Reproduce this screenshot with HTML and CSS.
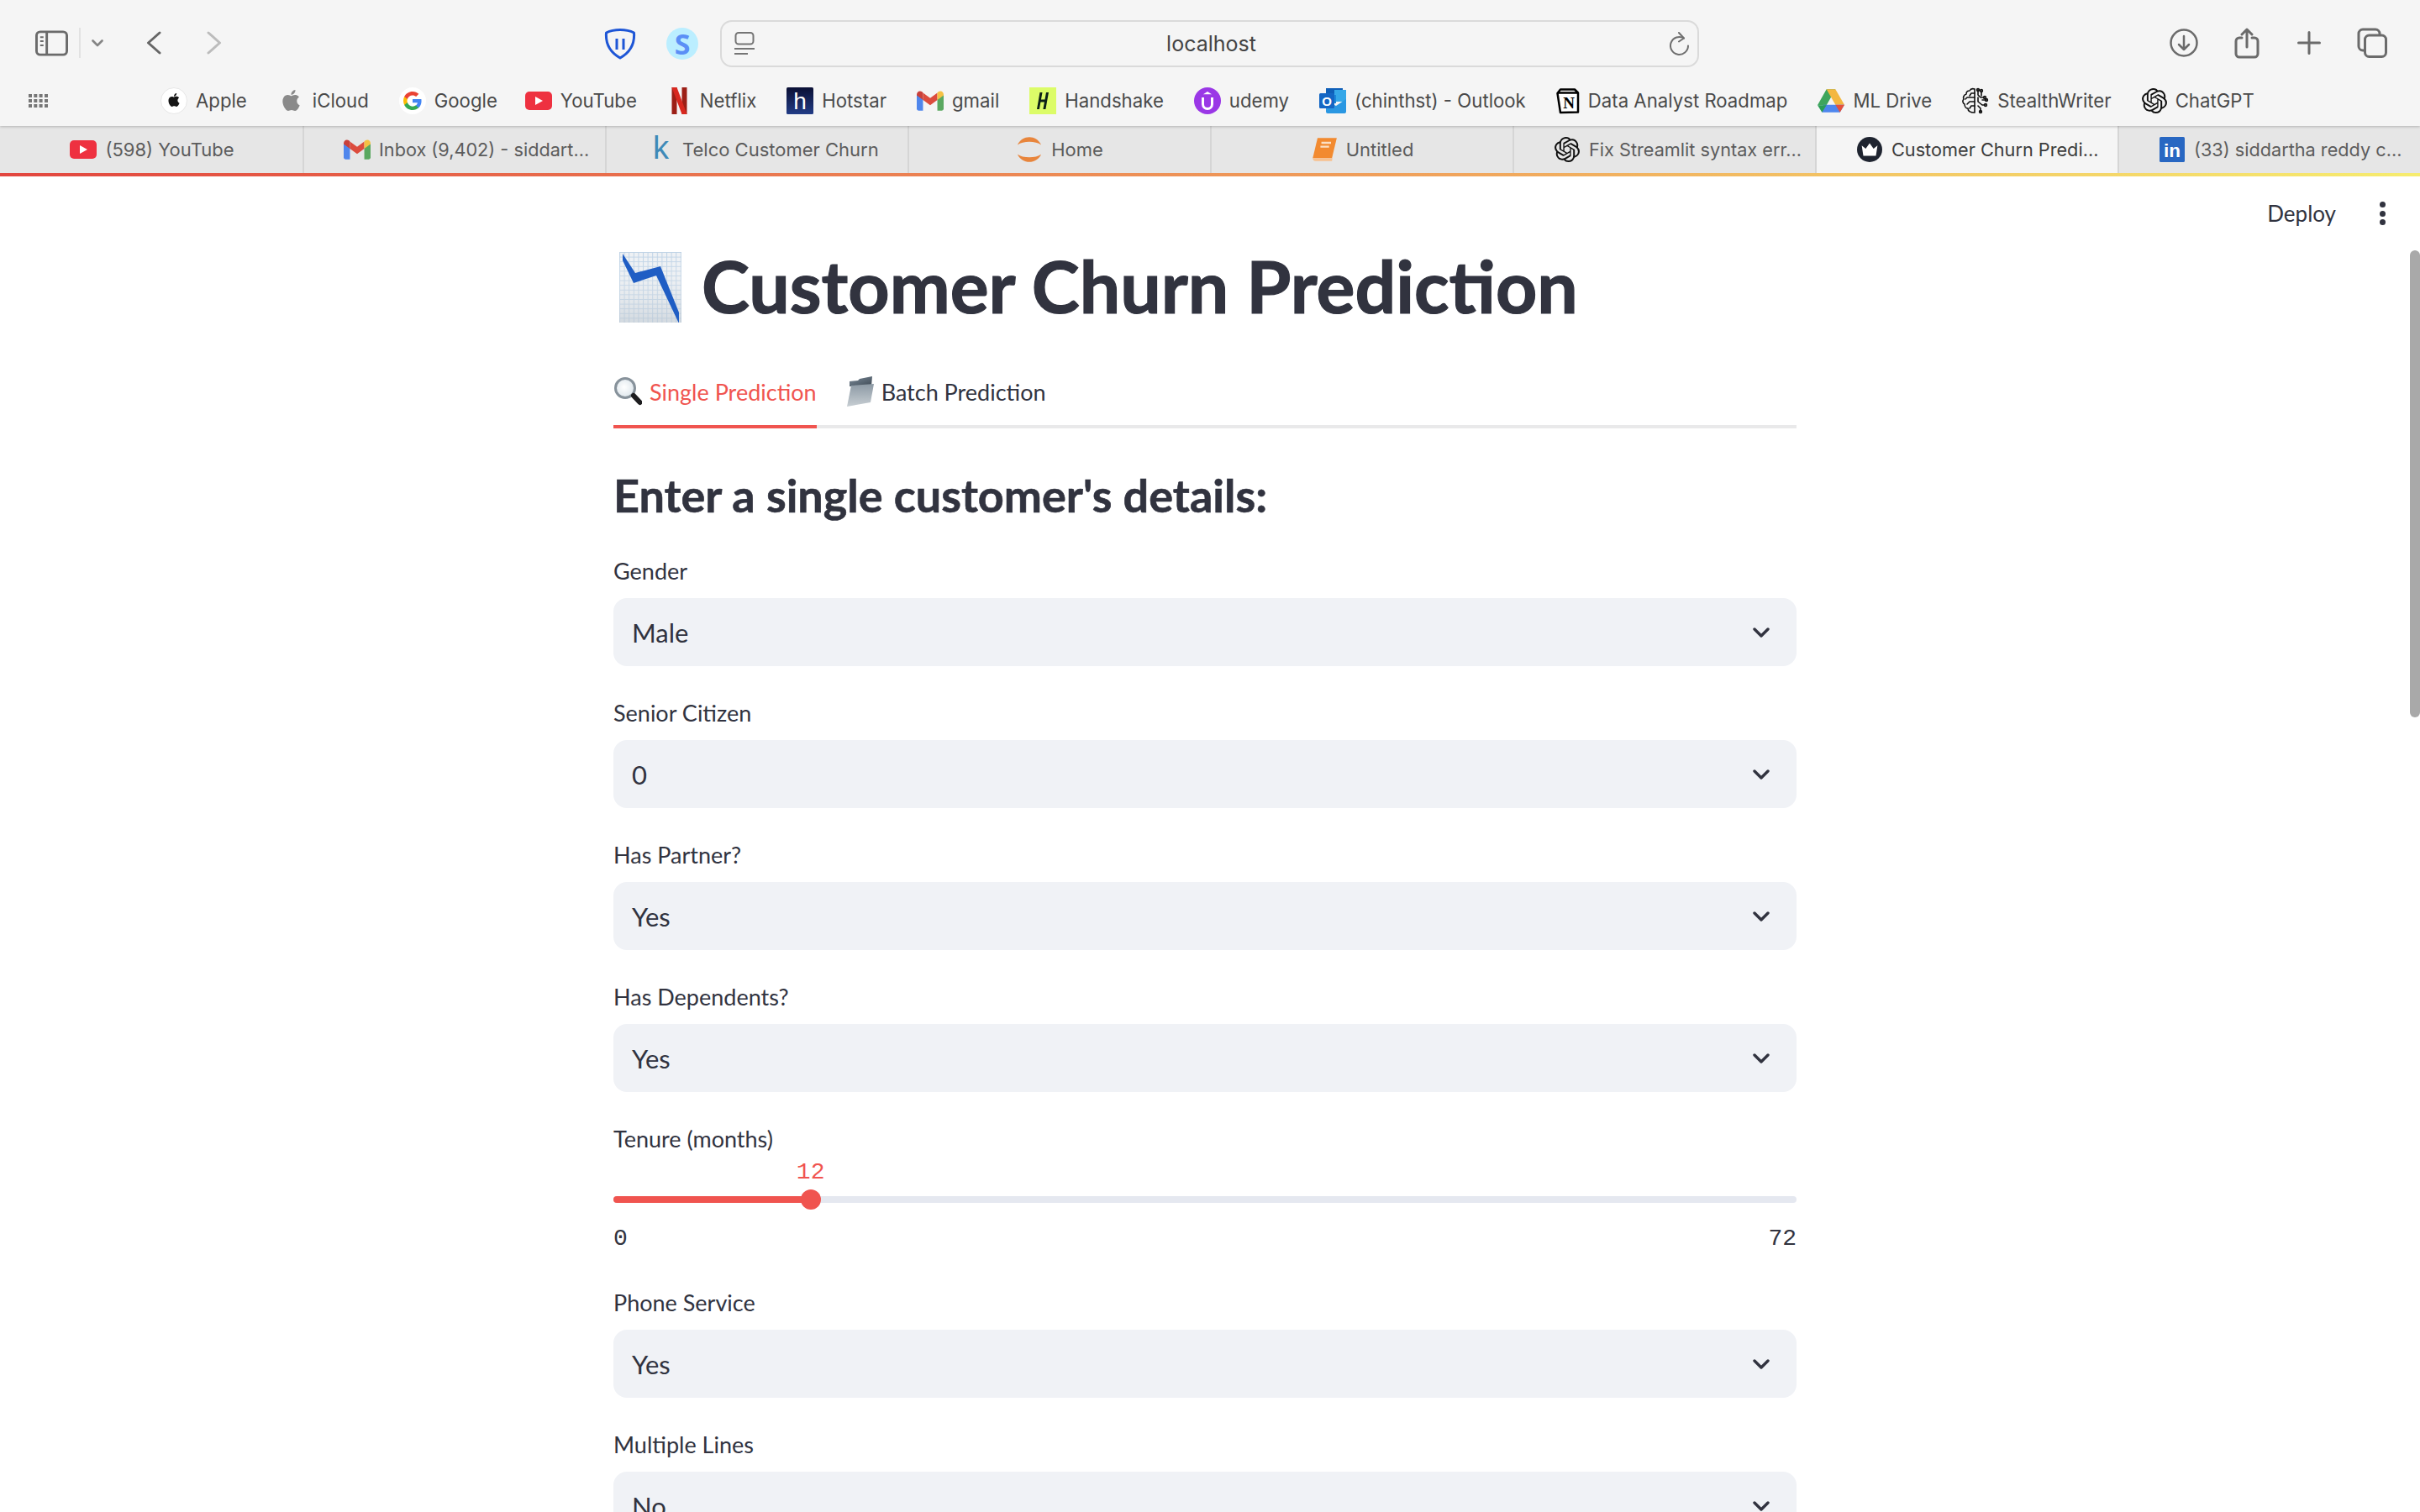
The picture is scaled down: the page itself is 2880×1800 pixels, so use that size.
FILE: index.html
```html
<!DOCTYPE html>
<html lang="en">
<head>
<meta charset="utf-8">
<title>Customer Churn Prediction</title>
<link rel="stylesheet" href="styles.css">
</head>
<body>
<svg class="defs" aria-hidden="true">
  <defs>
    <symbol id="i-yt" viewBox="0 0 32 24"><rect y="1" width="32" height="22" rx="5" fill="#ee3140"/><path d="M12 7l9 5-9 5z" fill="#fff"/></symbol>
    <symbol id="i-gmail" viewBox="0 0 30 24"><path d="M0 5v16a2 2 0 0 0 2 2h5V10z" fill="#4f86ec"/><path d="M23 23h5a2 2 0 0 0 2-2V5l-7 5z" fill="#5aa860"/><path d="M7 11V3l8 6 8-6v8l-8 6z" fill="#dc4c3e"/><path d="M0 5c0-3 3-5 6-3l1 1v8L0 6z" fill="#c9403a"/><path d="M23 3l1-1c3-2 6 0 6 3v1l-7 5z" fill="#f5c144"/></symbol>
    <symbol id="i-gpt" viewBox="0 0 24 24"><path d="M22.2819 9.8211a5.9847 5.9847 0 0 0-.5157-4.9108 6.0462 6.0462 0 0 0-6.5098-2.9A6.0651 6.0651 0 0 0 4.9807 4.1818a5.9847 5.9847 0 0 0-3.9977 2.9 6.0462 6.0462 0 0 0 .7427 7.0966 5.98 5.98 0 0 0 .511 4.9107 6.051 6.051 0 0 0 6.5146 2.9001A5.9847 5.9847 0 0 0 13.2599 24a6.0557 6.0557 0 0 0 5.7718-4.2058 5.9894 5.9894 0 0 0 3.9977-2.9001 6.0557 6.0557 0 0 0-.7475-7.0729zm-9.022 12.6081a4.4755 4.4755 0 0 1-2.8764-1.0408l.1419-.0804 4.7783-2.7582a.7948.7948 0 0 0 .3927-.6813v-6.7369l2.02 1.1686a.071.071 0 0 1 .038.052v5.5826a4.504 4.504 0 0 1-4.4945 4.4944zm-9.6607-4.1254a4.4708 4.4708 0 0 1-.5346-3.0137l.142.0852 4.783 2.7582a.7712.7712 0 0 0 .7806 0l5.8428-3.3685v2.3324a.0804.0804 0 0 1-.0332.0615L9.74 19.9502a4.4992 4.4992 0 0 1-6.1408-1.6464zM2.3408 7.8956a4.485 4.485 0 0 1 2.3655-1.9728V11.6a.7664.7664 0 0 0 .3879.6765l5.8144 3.3543-2.0201 1.1685a.0757.0757 0 0 1-.071 0l-4.8303-2.7865A4.504 4.504 0 0 1 2.3408 7.872zm16.5963 3.8558L13.1038 8.364 15.1192 7.2a.0757.0757 0 0 1 .071 0l4.8303 2.7913a4.4944 4.4944 0 0 1-.6765 8.1042v-5.6772a.79.79 0 0 0-.407-.667zm2.0107-3.0231l-.142-.0852-4.7735-2.7818a.7759.7759 0 0 0-.7854 0L9.409 9.2297V6.8974a.0662.0662 0 0 1 .0284-.0615l4.8303-2.7866a4.4992 4.4992 0 0 1 6.6802 4.66zM8.3065 12.863l-2.02-1.1638a.0804.0804 0 0 1-.038-.0567V6.0742a4.4992 4.4992 0 0 1 7.3757-3.4537l-.142.0805L8.704 5.459a.7948.7948 0 0 0-.3927.6813zm1.0976-2.3654l2.602-1.4998 2.6069 1.4998v2.9994l-2.5974 1.4997-2.6067-1.4997Z" fill="#111"/></symbol>
    <symbol id="i-apple" viewBox="0 0 24 24"><path d="M12.152 6.896c-.948 0-2.415-1.078-3.96-1.04-2.04.027-3.91 1.183-4.961 3.014-2.117 3.675-.546 9.103 1.519 12.09 1.013 1.454 2.208 3.09 3.792 3.039 1.52-.065 2.09-.987 3.935-.987 1.831 0 2.35.987 3.96.948 1.637-.026 2.676-1.48 3.676-2.948 1.156-1.688 1.636-3.325 1.662-3.415-.039-.013-3.182-1.221-3.22-4.857-.026-3.04 2.48-4.494 2.597-4.559-1.429-2.09-3.623-2.324-4.39-2.376-2-.156-3.675 1.09-4.61 1.09zM15.53 3.83c.843-1.012 1.4-2.427 1.245-3.83-1.207.052-2.662.805-3.532 1.818-.78.896-1.454 2.338-1.273 3.714 1.338.104 2.715-.688 3.559-1.701"/></symbol>
    <pattern id="grid" width="5.6" height="5.6" patternUnits="userSpaceOnUse"><rect width="5.6" height="5.6" fill="#eef1f4"/><path d="M0 .5h5.6M.5 0v5.6" stroke="#bfd3e6" stroke-width="1"/></pattern>
    <linearGradient id="chartbg" x1="0" y1="0" x2="0" y2="1"><stop offset="0" stop-color="#fff" stop-opacity="0"/><stop offset="1" stop-color="#bcc6cf" stop-opacity=".55"/></linearGradient>
    <linearGradient id="folder" x1="0" y1="0" x2="1" y2="1"><stop offset="0" stop-color="#7a8a98"/><stop offset="1" stop-color="#3f4a55"/></linearGradient>
    <linearGradient id="folder2" x1="0" y1="0" x2="0" y2="1"><stop offset="0" stop-color="#8c99a4"/><stop offset="1" stop-color="#c7ced3"/></linearGradient>
    <linearGradient id="hot" x1="0" y1="0" x2="0" y2="1"><stop offset="0" stop-color="#0b1034"/><stop offset="1" stop-color="#223c86"/></linearGradient>
    <radialGradient id="lens" cx=".45" cy=".45" r=".6"><stop offset="0" stop-color="#fff"/><stop offset="1" stop-color="#dbe4ea"/></radialGradient>
  </defs>
</svg>

<header class="chrome">
  <div class="toolbar">
    <div class="nav">
      <svg class="ic-side" viewBox="0 0 40 31" fill="none" stroke="#6b6b6b" stroke-width="3"><rect x="1.5" y="1.5" width="37" height="28" rx="4.5"/><path d="M14 2v27"/><path d="M6 8h4M6 13h4M6 18h4" stroke-width="2"/></svg>
      <span class="nav-sep"></span>
      <svg class="ic-chev" viewBox="0 0 14 9" fill="none" stroke="#858585" stroke-width="2.6" stroke-linecap="round" stroke-linejoin="round"><path d="M1.5 1.5L7 7l5.5-5.5"/></svg>
      <svg class="ic-back" viewBox="0 0 18 28" fill="none" stroke="#666" stroke-width="3" stroke-linecap="round" stroke-linejoin="round"><path d="M16 2L2.5 14 16 26"/></svg>
      <svg class="ic-fwd" viewBox="0 0 18 28" fill="none" stroke="#bcbcbc" stroke-width="3" stroke-linecap="round" stroke-linejoin="round"><path d="M2 2l13.500 12L2 26"/></svg>
    </div>
    <div class="exts">
      <svg class="ic-ext" viewBox="0 0 38 38" fill="none" stroke="#1e56d6" stroke-width="3"><path d="M19 2.500c6 0 12 1.200 16.500 3.500 1 13-4 23-16.500 30C6.500 29 1.500 19 2.500 6 7 3.700 13 2.500 19 2.500z" stroke-linejoin="round"/><path d="M15 13v13M23 13v13"/></svg>
      <span class="ext-s">S</span>
    </div>
    <div class="address">
      <svg class="ic-page" viewBox="0 0 24 28" fill="none" stroke="#757575" stroke-width="2"><rect x="1.500" y="1" width="21" height="13.500" rx="3.500"/><path d="M0 20h24M0 26h16"/></svg>
      <span class="host">localhost</span>
      <svg class="ic-reload" viewBox="0 0 24 28" fill="none" stroke="#6f6f6f" stroke-width="2" stroke-linecap="round" stroke-linejoin="round"><path d="M17 7.500A10.500 10.500 0 1 0 22 16.500"/><path d="M11 1l6 6.500-6 4"/></svg>
    </div>
    <div class="actions">
      <svg class="ic-dl" viewBox="0 0 34 34" fill="none" stroke="#6b6b6b" stroke-width="2.500" stroke-linecap="round" stroke-linejoin="round"><circle cx="17" cy="17" r="15.500"/><path d="M17 9v16M11 19l6 6 6-6"/></svg>
      <svg class="ic-share" viewBox="0 0 30 37" fill="none" stroke="#6b6b6b" stroke-width="3" stroke-linecap="round" stroke-linejoin="round"><path d="M9 12H6a4 4 0 0 0-4 4v15a4 4 0 0 0 4 4h18a4 4 0 0 0 4-4V16a4 4 0 0 0-4-4h-3"/><path d="M15 23V2M9 8l6-6 6 6"/></svg>
      <svg class="ic-plus" viewBox="0 0 28 28" fill="none" stroke="#6b6b6b" stroke-width="3" stroke-linecap="round"><path d="M14 1.500v25M1.500 14h25"/></svg>
      <svg class="ic-tabs" viewBox="0 0 36 36" fill="none" stroke="#6b6b6b" stroke-width="3"><rect x="9.500" y="9" width="25" height="25.500" rx="5"/><path d="M9 27H7a5 5 0 0 1-5-5V7a5 5 0 0 1 5-5h15a5 5 0 0 1 5 5v2"/></svg>
    </div>
  </div>

  <nav class="bookmarks">
    <svg class="ic-grid" viewBox="0 0 23 16" fill="#767676"><path d="M0 0h4v4H0zM6.300 0h4v4h-4zM12.600 0h4v4h-4zM19 0h4v4h-4zM0 6h4v4H0zM6.300 6h4v4h-4zM12.600 6h4v4h-4zM19 6h4v4h-4zM0 12h4v4H0zM6.300 12h4v4h-4zM12.600 12h4v4h-4zM19 12h4v4h-4z"/></svg>
    <div class="marks">
      <a class="mark"><svg class="fav" viewBox="0 0 32 32"><circle cx="16" cy="16" r="15.500" fill="#fff" stroke="#e6e6e6"/><use href="#i-apple" x="8" y="7" width="16" height="16" fill="#161616"/></svg>Apple</a>
      <a class="mark"><svg class="fav" viewBox="0 0 32 32"><use href="#i-apple" x="4" y="3" width="25" height="25" fill="#8a8a8a"/></svg>iCloud</a>
      <a class="mark"><svg class="fav" viewBox="0 0 32 32"><circle cx="16" cy="16" r="16" fill="#fff"/><g transform="translate(4 4)"><path d="M22.560 12.250c0-.78-.07-1.530-.2-2.250H12v4.260h5.920c-.26 1.370-1.040 2.530-2.210 3.310v2.770h3.570c2.080-1.920 3.280-4.740 3.280-8.090z" fill="#4285F4"/><path d="M12 23c2.970 0 5.460-.98 7.280-2.660l-3.570-2.770c-.98.66-2.230 1.060-3.710 1.060-2.860 0-5.290-1.930-6.160-4.530H2.180v2.840C3.990 20.530 7.700 23 12 23z" fill="#34A853"/><path d="M5.840 14.090c-.22-.66-.35-1.360-.35-2.090s.13-1.430.35-2.090V7.070H2.180C1.430 8.550 1 10.220 1 12s.43 3.450 1.180 4.930l2.850-2.220.81-.62z" fill="#FBBC05"/><path d="M12 5.380c1.620 0 3.060.56 4.210 1.640l3.150-3.150C17.450 2.090 14.970 1 12 1 7.700 1 3.990 3.470 2.180 7.070l3.660 2.840c.87-2.600 3.300-4.530 6.160-4.530z" fill="#EA4335"/></g></svg>Google</a>
      <a class="mark mark-yt"><svg class="fav" viewBox="0 0 32 24"><use href="#i-yt"/></svg>YouTube</a>
      <a class="mark"><svg class="fav fav-n" viewBox="0 0 20 32"><path d="M1 0h6v32l-6 0z" fill="#9c1f16"/><path d="M13 0h6v32h-6z" fill="#9c1f16"/><path d="M1 0h6l12 32h-6z" fill="#d8281f"/></svg>Netflix</a>
      <a class="mark"><svg class="fav" viewBox="0 0 32 32"><rect width="32" height="32" rx="1.500" fill="url(#hot)"/><text class="fav-h" x="16" y="26" text-anchor="middle">h</text></svg>Hotstar</a>
      <a class="mark"><svg class="fav" viewBox="0 0 30 24"><use href="#i-gmail"/></svg>gmail</a>
      <a class="mark"><svg class="fav" viewBox="0 0 32 32"><rect width="32" height="32" fill="#dcfc68"/><path d="M12.500 6h3l-3.600 20H9zM20 6h3l-3.600 20h-3zM11 14.500h8.500l-.5 3h-8.500z" fill="#0d2018"/></svg>Handshake</a>
      <a class="mark"><svg class="fav" viewBox="0 0 32 32"><circle cx="16" cy="16" r="16" fill="#9a37e6"/><path d="M16 5l5 3.200H11z" fill="#fff"/><path d="M10.500 12v8a5.500 5.500 0 0 0 11 0v-8" fill="none" stroke="#fff" stroke-width="3"/></svg>udemy</a>
      <a class="mark"><svg class="fav" viewBox="0 0 32 30"><rect x="8" y="0" width="20" height="11" fill="#0f5fb8"/><rect x="18" y="2" width="14" height="14" fill="#35a7e8"/><rect x="8" y="8" width="12" height="10" fill="#1a86d8"/><path d="M8 15l12 6 12-8v15a2 2 0 0 1-2 2H10a2 2 0 0 1-2-2z" fill="#2a97e2"/><rect x="0" y="6" width="18" height="18" rx="1.500" fill="#1466c4"/><text class="fav-o" x="9" y="21" text-anchor="middle">O</text></svg>(chinthst) - Outlook</a>
      <a class="mark"><svg class="fav fav-not" viewBox="0 0 28 30"><path d="M1.500 6L5 29l21 -.5V5.500L22 1.500 5 1.500z" fill="#fff" stroke="#000" stroke-width="2.500" stroke-linejoin="round"/><path d="M2 5.500h24" stroke="#000" stroke-width="2.500"/><text class="fav-nt" x="15" y="24" text-anchor="middle">N</text></svg>Data Analyst Roadmap</a>
      <a class="mark"><svg class="fav" viewBox="0 0 30 28"><path d="M10 1h10L10 19H0z" fill="#3ea55c"/><path d="M10 1h10l10 17.500H20z" fill="#f4b740"/><path d="M6.500 18.500H30L25 27H5z" fill="#4e86ee"/><path d="M0 19h10l-5 8z" fill="#2a9d56"/><path d="M20 18.500h10L25 27z" fill="#e4503c"/></svg>ML Drive</a>
      <a class="mark"><svg class="fav" viewBox="0 0 32 32" fill="none" stroke="#111" stroke-width="1.600" stroke-linecap="round" stroke-linejoin="round"><path d="M15 2v28M15 2c-3-1-5 0-6 2-3 0-4 2-4 4-3 1-4 4-3 6-2 2-1 5 1 6 0 3 2 5 4 5 0 3 3 5 8 5"/><path d="M15 7H11M15 12H6M15 17H9M15 22H11M11 7l-2 3M6 12l-2 2M9 17l-3 3M11 22l-2 3"/><path d="M19 3v6l3 3M23 5v5M19 12v5l5 4h3M19 22l3 3v4M24 15h5M22 12h4"/><circle cx="19" cy="3" r="1.400"/><circle cx="23" cy="4" r="1.400"/><circle cx="27" cy="12" r="1.400"/><circle cx="29" cy="15" r="1.400"/><circle cx="28" cy="21" r="1.400"/><circle cx="22" cy="29" r="1.400"/></svg>StealthWriter</a>
      <a class="mark"><svg class="fav fav-gpt" viewBox="0 0 24 24"><use href="#i-gpt"/></svg>ChatGPT</a>
    </div>
  </nav>
</header>

<div class="tabstrip">
  <div class="tab"><svg class="tab-ic" viewBox="0 0 32 24"><use href="#i-yt"/></svg><span>(598) YouTube</span></div>
  <div class="tab tab-long"><svg class="tab-ic" viewBox="0 0 30 24"><use href="#i-gmail"/></svg><span>Inbox (9,402) - siddart…</span></div>
  <div class="tab tab-long tab-kag"><span class="tab-k">k</span><span>Telco Customer Churn</span></div>
  <div class="tab"><svg class="tab-ic" viewBox="0 0 32 32" fill="#e8853c"><path d="M1 10C7 -3 25 -3 31 10 24 5 8 5 1 10zM1 22c6 13 24 13 30 0-7 5-23 5-30 0z"/></svg><span>Home</span></div>
  <div class="tab"><svg class="tab-ic" viewBox="0 0 28 26"><path d="M7 1h20l-5 21H2z" fill="#f28a30"/><path d="M2 22c0 2 1 3 3 3h17l.5-3z" fill="#f7c190"/><path d="M11 6h10M10 10h9" stroke="#fbe0c4" stroke-width="2"/></svg><span>Untitled</span></div>
  <div class="tab tab-long"><svg class="tab-ic" viewBox="0 0 24 24"><use href="#i-gpt"/></svg><span>Fix Streamlit syntax err…</span></div>
  <div class="tab tab-long tab-active"><svg class="tab-ic" viewBox="0 0 32 32"><circle cx="16" cy="16" r="16" fill="#1f2430"/><path d="M6 11l5 4 5-7 5 7 5-4-2 13H8z" fill="#fff"/></svg><span>Customer Churn Predi…</span></div>
  <div class="tab tab-long tab-last"><svg class="tab-ic" viewBox="0 0 28 28"><rect width="28" height="28" rx="1.500" fill="#2867c2"/><text class="fav-in" x="14" y="22" text-anchor="middle">in</text></svg><span>(33) siddartha reddy c…</span></div>
</div>
<div class="loadbar"></div>

<main class="app">
  <div class="app-header">
    <span class="deploy">Deploy</span>
    <span class="kebab"><i></i><i></i><i></i></span>
  </div>
  <div class="block">
    <div class="title-row">
      <svg class="emoji-chart" viewBox="0 0 74 84"><rect width="74" height="84" fill="url(#grid)"/><rect width="74" height="84" fill="url(#chartbg)"/><path d="M4 2v8l13 27 27-9 27 57V72L49 17 19 25z" fill="#1f5dc4"/></svg>
      <h1>Customer Churn Prediction</h1>
    </div>

    <div class="tabs">
      <button class="st-tab st-tab-on">
        <svg class="st-emoji" viewBox="0 0 34 36"><circle cx="14" cy="14" r="11.500" fill="url(#lens)" stroke="#87929b" stroke-width="3"/><path d="M24 23l7.500 8" stroke="#1d1d1f" stroke-width="6" stroke-linecap="round"/></svg>
        <span>Single Prediction</span>
      </button>
      <button class="st-tab">
        <svg class="st-emoji" viewBox="0 0 34 36"><path d="M5 6l10-1 2-2 15-3-1 12H5z" fill="url(#folder)"/><path d="M7 11l27-2-4 22-28 5z" fill="url(#folder2)"/></svg>
        <span>Batch Prediction</span>
      </button>
    </div>

    <h2>Enter a single customer's details:</h2>

    <div class="field">
      <label class="lbl">Gender</label>
      <div class="select"><span>Male</span><svg class="caret" viewBox="0 0 20 12" fill="none" stroke="#31333f" stroke-width="3.400" stroke-linecap="round" stroke-linejoin="round"><path d="M2 2l8 8 8-8"/></svg></div>
    </div>
    <div class="field">
      <label class="lbl">Senior Citizen</label>
      <div class="select"><span>0</span><svg class="caret" viewBox="0 0 20 12" fill="none" stroke="#31333f" stroke-width="3.400" stroke-linecap="round" stroke-linejoin="round"><path d="M2 2l8 8 8-8"/></svg></div>
    </div>
    <div class="field">
      <label class="lbl">Has Partner?</label>
      <div class="select"><span>Yes</span><svg class="caret" viewBox="0 0 20 12" fill="none" stroke="#31333f" stroke-width="3.400" stroke-linecap="round" stroke-linejoin="round"><path d="M2 2l8 8 8-8"/></svg></div>
    </div>
    <div class="field">
      <label class="lbl">Has Dependents?</label>
      <div class="select"><span>Yes</span><svg class="caret" viewBox="0 0 20 12" fill="none" stroke="#31333f" stroke-width="3.400" stroke-linecap="round" stroke-linejoin="round"><path d="M2 2l8 8 8-8"/></svg></div>
    </div>
    <div class="field">
      <label class="lbl">Tenure (months)</label>
      <div class="slider">
        <div class="track">
          <div class="fill" style="width:16.667%"></div>
          <div class="thumb" style="left:16.667%"><span class="thumb-val">12</span></div>
        </div>
        <div class="ticks"><span>0</span><span>72</span></div>
      </div>
    </div>
    <div class="field">
      <label class="lbl">Phone Service</label>
      <div class="select"><span>Yes</span><svg class="caret" viewBox="0 0 20 12" fill="none" stroke="#31333f" stroke-width="3.400" stroke-linecap="round" stroke-linejoin="round"><path d="M2 2l8 8 8-8"/></svg></div>
    </div>
    <div class="field">
      <label class="lbl">Multiple Lines</label>
      <div class="select"><span>No</span><svg class="caret" viewBox="0 0 20 12" fill="none" stroke="#31333f" stroke-width="3.400" stroke-linecap="round" stroke-linejoin="round"><path d="M2 2l8 8 8-8"/></svg></div>
    </div>
  </div>
  <div class="scrollthumb"></div>
</main>
</body>
</html>
```
FILE: styles.css
```css
* { box-sizing: border-box; }
html, body { margin: 0; padding: 0; height: 1800px; overflow: hidden; background: #fff; }
body { font-family: "Inter", "Liberation Sans", sans-serif; display: flex; flex-direction: column; }
.defs { position: absolute; width: 0; height: 0; }

.chrome { background: #f5f5f5; height: 150px; flex: none; box-shadow: 0 1px 3px rgba(0,0,0,.22); position: relative; z-index: 2; }
.toolbar { height: 100px; display: grid; grid-template-columns: 677px 138px 1165px 1fr; padding: 0 39px 0 42px; align-items: start; }

.nav { display: flex; align-items: center; height: 36px; margin-top: 33px; }
.ic-side { width: 39px; height: 31px; }
.nav-sep { width: 2px; height: 36px; background: #e2e2e2; margin-left: 13px; }
.ic-chev { width: 14px; height: 9px; margin-left: 13px; }
.ic-back { width: 18px; height: 28px; margin-left: 51px; }
.ic-fwd { width: 18px; height: 28px; margin-left: 54px; }

.exts { display: flex; align-items: center; height: 38px; margin-top: 33px; gap: 36px; }
.ic-ext { width: 38px; height: 38px; }
.ext-s { width: 38px; height: 38px; border-radius: 50%; background: #bbeeff; color: #5b8ff6; font: 700 34px/38px "Noto Sans", sans-serif; text-align: center; }

.address { height: 56px; margin-top: 24px; border: 2.5px solid #dadada; border-radius: 14px; display: flex; align-items: center; justify-content: space-between; padding: 0 9px 0 15px; background: #f5f5f5; }
.ic-page { width: 24px; height: 28px; }
.ic-reload { width: 24px; height: 28px; }
.host { font-size: 25px; color: #444; margin-right: 2px; }

.actions { display: flex; align-items: center; justify-content: flex-end; gap: 43px; height: 38px; margin-top: 32px; }
.ic-dl { width: 34px; height: 34px; }
.ic-share { width: 30px; height: 37px; }
.ic-plus { width: 28px; height: 28px; margin-left: 2px; }
.ic-tabs { width: 36px; height: 36px; }

.bookmarks { height: 50px; display: flex; align-items: center; padding-left: 34px; padding-bottom: 10px; }
.ic-grid { width: 23px; height: 16px; flex: none; }
.marks { display: flex; align-items: center; gap: 36px; margin-left: 134px; }
.mark { display: flex; align-items: center; gap: 10px; font-size: 22.200px; line-height: 30px; color: #4a4a4a; white-space: nowrap; }
.mark-yt { margin-left: -3px; }
.fav { width: 32px; height: 32px; flex: none; }
.fav-n { width: 29px; }
.fav-not { width: 28px; }
.fav-gpt { width: 30px; }
.fav-h { font: 400 28px "Liberation Sans", sans-serif; fill: #fff; }
.fav-o { font: 700 15px "Liberation Sans", sans-serif; fill: #fff; }
.fav-nt { font: 700 19px "Liberation Serif", serif; fill: #000; }
.fav-in { font: 700 21px "Liberation Sans", sans-serif; fill: #fff; }

.tabstrip { height: 56px; flex: none; display: flex; background: #e6e6e6; padding-left: 2px; }
.tab { width: 360px; flex: none; display: flex; align-items: center; justify-content: center; gap: 10px; border-right: 2px solid #d5d5d5; font-size: 22px; color: #5c5c5c; white-space: nowrap; }
.tab-long { justify-content: flex-start; padding-left: 47px; font-size: 21.700px; }
.tab-kag { padding-left: 55px; gap: 16px; font-size: 22px; }
.tab-last { width: 358px; border-right: 0; }
.tab-active { background: #f5f5f5; color: #3c3c3c; box-shadow: -2px 0 0 #d5d5d5; }
.tab-ic { width: 32px; height: 30px; flex: none; }
.tab-k { font: 400 38px/1 "Liberation Sans", sans-serif; color: #3f8ab8; margin-top: -4px; }
.loadbar { height: 4px; flex: none; background: linear-gradient(90deg, #e2463f 0%, #ea7a50 33%, #f0a45c 60%, #f3c765 78%, #f6ec6f 100%); }

.app { flex: 1; position: relative; background: #fff; color: #31333f; font-family: "Lato", "Noto Sans", sans-serif; overflow: hidden; }
.app-header { position: absolute; top: 0; right: 0; height: 88px; display: flex; align-items: center; padding-right: 40px; }
.deploy { font-size: 26px; color: #31333f; margin-right: 52px; }
.kebab { display: flex; flex-direction: column; gap: 3.500px; width: 8px; }
.kebab i { display: block; width: 7px; height: 7px; border-radius: 50%; background: #31333f; }
.scrollthumb { position: absolute; right: 0; top: 88px; width: 12px; height: 556px; background: #a9a9a9; border-radius: 6px; }

.block { margin-left: 730px; width: 1408px; padding-top: 80px; }
.title-row { display: flex; align-items: center; height: 104px; padding-left: 7px; gap: 24px; }
.emoji-chart { width: 74px; height: 84px; flex: none; }
h1 { margin: -4px 0 0; font-weight: 700; font-size: 86px; line-height: 104px; color: #31333f; white-space: nowrap; -webkit-text-stroke: 1.200px #31333f; }

.tabs { display: flex; gap: 34px; margin-top: 36px; box-shadow: inset 0 -4px 0 #e9e9ea; height: 80px; }
.st-tab { display: flex; align-items: center; gap: 9px; padding: 0 0 8px; height: 80px; border: 0; background: none; font: inherit; font-size: 27px; color: #31333f; }
.st-tab-on { color: #f0544f; border-bottom: 4px solid #f0544f; padding-bottom: 4px; }
.st-emoji { width: 34px; height: 36px; flex: none; }

h2 { font-weight: 700; font-size: 54px; line-height: 80px; height: 80px; margin: 40px 0 30px; white-space: nowrap; color: #31333f; -webkit-text-stroke: .6px #31333f; }

.field { margin-bottom: 36px; }
.lbl { display: block; height: 40px; font-size: 27px; line-height: 40px; margin-bottom: 12px; color: #31333f; }
.select { height: 81px; border-radius: 16px; background: #f0f2f6; display: flex; align-items: center; justify-content: space-between; padding: 0 32px 0 22px; font-size: 31px; color: #31333f; }
.caret { width: 20px; height: 12px; }

.slider { height: 107px; padding-top: 36px; }
.track { height: 8px; border-radius: 4px; background: #e5e8f0; position: relative; }
.fill { height: 8px; border-radius: 4px; background: #f0544f; }
.thumb { position: absolute; top: -8px; width: 24px; height: 24px; margin-left: -12px; border-radius: 50%; background: #f0544f; }
.thumb-val { position: absolute; bottom: 29px; left: 50%; transform: translateX(-50%); font: 28px/30px "Liberation Mono", monospace; color: #f0544f; }
.ticks { display: flex; justify-content: space-between; margin-top: 28px; font: 28px/30px "Liberation Mono", monospace; color: #31333f; }
```
